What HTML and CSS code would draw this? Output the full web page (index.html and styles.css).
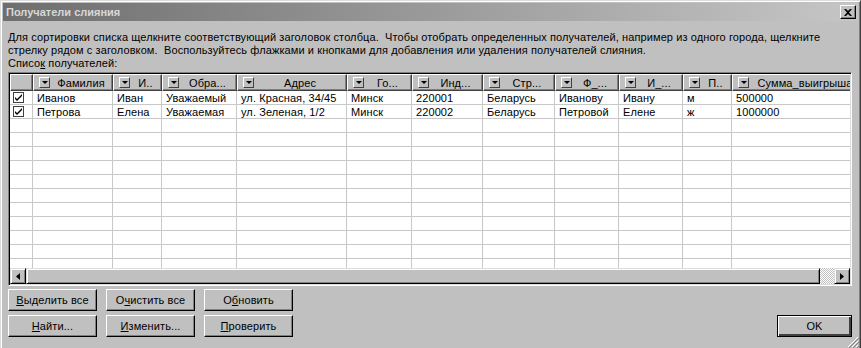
FILE: index.html
```html
<!DOCTYPE html>
<html lang="ru">
<head>
<meta charset="utf-8">
<title>Получатели слияния</title>
<link rel="stylesheet" href="styles.css">
</head>
<body>
<div class="window">
  <div class="titlebar">
    <span class="title">Получатели слияния</span>
    <span class="close"><svg width="8" height="7" viewBox="0 0 8 7"><path d="M0 0h2l2 2 2-2h2L5 3.5 8 7H6L4 5 2 7H0l3-3.5z" fill="#000"/></svg></span>
  </div>
  <div class="content">
    <p class="intro">Для сортировки списка щелкните соответствующий заголовок столбца.&nbsp; Чтобы отобрать определенных получателей, например из одного города, щелкните<br>стрелку рядом с заголовком.&nbsp; Воспользуйтесь флажками и кнопками для добавления или удаления получателей слияния.</p>
    <p class="label">Списо<u>к</u> получателей:</p>
    <div class="grid">
      <div class="table">
        <div class="row head">
          <div class="hc"></div>
          <div class="hc"><span class="dd"></span><span class="hl">Фамилия</span></div>
          <div class="hc"><span class="dd"></span><span class="hl">И..</span></div>
          <div class="hc"><span class="dd"></span><span class="hl">Обра...</span></div>
          <div class="hc"><span class="dd"></span><span class="hl">Адрес</span></div>
          <div class="hc"><span class="dd"></span><span class="hl">Го...</span></div>
          <div class="hc"><span class="dd"></span><span class="hl">Инд...</span></div>
          <div class="hc"><span class="dd"></span><span class="hl">Стр...</span></div>
          <div class="hc"><span class="dd"></span><span class="hl">Ф_...</span></div>
          <div class="hc"><span class="dd"></span><span class="hl">И_...</span></div>
          <div class="hc"><span class="dd"></span><span class="hl">П..</span></div>
          <div class="hc"><span class="dd"></span><span class="hl">Сумма_выигрыша</span></div>
        </div>
        <div class="rows">
          <div class="row">
            <div class="c cb"><span class="check"><svg width="9" height="9" viewBox="0 0 9 9"><path d="M1 4l2 2 5-5v2L3 8 1 6z" fill="#000"/></svg></span></div>
            <div class="c">Иванов</div><div class="c">Иван</div><div class="c">Уважаемый</div><div class="c">ул. Красная, 34/45</div><div class="c">Минск</div><div class="c">220001</div><div class="c">Беларусь</div><div class="c">Иванову</div><div class="c">Ивану</div><div class="c">м</div><div class="c">500000</div>
          </div>
          <div class="row">
            <div class="c cb"><span class="check"><svg width="9" height="9" viewBox="0 0 9 9"><path d="M1 4l2 2 5-5v2L3 8 1 6z" fill="#000"/></svg></span></div>
            <div class="c">Петрова</div><div class="c">Елена</div><div class="c">Уважаемая</div><div class="c">ул. Зеленая, 1/2</div><div class="c">Минск</div><div class="c">220002</div><div class="c">Беларусь</div><div class="c">Петровой</div><div class="c">Елене</div><div class="c">ж</div><div class="c">1000000</div>
          </div>
          <div class="row"><div class="c"></div><div class="c"></div><div class="c"></div><div class="c"></div><div class="c"></div><div class="c"></div><div class="c"></div><div class="c"></div><div class="c"></div><div class="c"></div><div class="c"></div><div class="c"></div></div>
          <div class="row"><div class="c"></div><div class="c"></div><div class="c"></div><div class="c"></div><div class="c"></div><div class="c"></div><div class="c"></div><div class="c"></div><div class="c"></div><div class="c"></div><div class="c"></div><div class="c"></div></div>
          <div class="row"><div class="c"></div><div class="c"></div><div class="c"></div><div class="c"></div><div class="c"></div><div class="c"></div><div class="c"></div><div class="c"></div><div class="c"></div><div class="c"></div><div class="c"></div><div class="c"></div></div>
          <div class="row"><div class="c"></div><div class="c"></div><div class="c"></div><div class="c"></div><div class="c"></div><div class="c"></div><div class="c"></div><div class="c"></div><div class="c"></div><div class="c"></div><div class="c"></div><div class="c"></div></div>
          <div class="row"><div class="c"></div><div class="c"></div><div class="c"></div><div class="c"></div><div class="c"></div><div class="c"></div><div class="c"></div><div class="c"></div><div class="c"></div><div class="c"></div><div class="c"></div><div class="c"></div></div>
          <div class="row"><div class="c"></div><div class="c"></div><div class="c"></div><div class="c"></div><div class="c"></div><div class="c"></div><div class="c"></div><div class="c"></div><div class="c"></div><div class="c"></div><div class="c"></div><div class="c"></div></div>
          <div class="row"><div class="c"></div><div class="c"></div><div class="c"></div><div class="c"></div><div class="c"></div><div class="c"></div><div class="c"></div><div class="c"></div><div class="c"></div><div class="c"></div><div class="c"></div><div class="c"></div></div>
          <div class="row"><div class="c"></div><div class="c"></div><div class="c"></div><div class="c"></div><div class="c"></div><div class="c"></div><div class="c"></div><div class="c"></div><div class="c"></div><div class="c"></div><div class="c"></div><div class="c"></div></div>
          <div class="row"><div class="c"></div><div class="c"></div><div class="c"></div><div class="c"></div><div class="c"></div><div class="c"></div><div class="c"></div><div class="c"></div><div class="c"></div><div class="c"></div><div class="c"></div><div class="c"></div></div>
          <div class="row"><div class="c"></div><div class="c"></div><div class="c"></div><div class="c"></div><div class="c"></div><div class="c"></div><div class="c"></div><div class="c"></div><div class="c"></div><div class="c"></div><div class="c"></div><div class="c"></div></div>
          <div class="row"><div class="c"></div><div class="c"></div><div class="c"></div><div class="c"></div><div class="c"></div><div class="c"></div><div class="c"></div><div class="c"></div><div class="c"></div><div class="c"></div><div class="c"></div><div class="c"></div></div>
        </div>
      </div>
      <div class="hscroll">
        <span class="arrow"><svg width="4" height="7" viewBox="0 0 4 7"><path d="M4 0v7L0 3.5z" fill="#000"/></svg></span>
        <span class="thumb"></span>
        <span class="track"></span>
        <span class="arrow"><svg width="4" height="7" viewBox="0 0 4 7"><path d="M0 0v7l4-3.5z" fill="#000"/></svg></span>
      </div>
    </div>
    <div class="bottom">
      <div class="btns">
        <button class="btn"><u>В</u>ыделить все</button>
        <button class="btn">О<u>ч</u>истить все</button>
        <button class="btn">О<u>б</u>новить</button>
        <button class="btn"><u>Н</u>айти...</button>
        <button class="btn"><u>И</u>зменить...</button>
        <button class="btn"><u>П</u>роверить</button>
      </div>
      <button class="btn ok">OK</button>
    </div>
  </div>
  <span class="grip"><svg width="12" height="12" viewBox="0 0 12 12"><path d="M11 1L1 11M11 5L5 11M11 9L9 11" stroke="#fff" stroke-width="1"/><path d="M12 2L2 12M12 6L6 12M12 10L10 12" stroke="#808080" stroke-width="1"/></svg></span>
</div>
</body>
</html>
```

FILE: styles.css
```css
* { box-sizing: border-box; }
html, body { margin: 0; padding: 0; background: #c0c0c0; }
body {
  font-family: "Liberation Sans", Arial, sans-serif;
  font-size: 11px;
  letter-spacing: 0.1px;
  color: #000;
  overflow: hidden;
}
.window {
  position: relative;
  width: 861px;
  height: 348px;
  display: flex;
  flex-direction: column;
  background: #c0c0c0;
  border-top: 1px solid #dcdcdc;
  border-left: 1px solid #dcdcdc;
  border-right: 1px solid #404040;
  box-shadow: inset 1px 1px 0 #fff, inset -1px 0 0 #808080;
  padding: 2px 2px 0 2px;
}
.titlebar {
  height: 18px;
  display: flex;
  align-items: center;
  justify-content: space-between;
  padding: 0 2px 0 3px;
  background: linear-gradient(to right, #6e6e6e, #c6c6c6);
}
.title {
  color: #d8d8d8;
  font-weight: bold;
  font-size: 11px;
  letter-spacing: 0;
}
.close {
  width: 16px;
  height: 14px;
  background: #c0c0c0;
  border-top: 1px solid #fff;
  border-left: 1px solid #fff;
  border-right: 1px solid #000;
  border-bottom: 1px solid #000;
  box-shadow: inset -1px -1px 0 #808080;
  display: flex;
  align-items: center;
  justify-content: center;
}
.content {
  flex: 1;
  display: flex;
  flex-direction: column;
  padding: 0 6px 0 5px;
}
.intro {
  margin: 10px 0 0 0;
  line-height: 13px;
  white-space: nowrap;
}
.label {
  margin: 0;
  line-height: 13px;
}
.grid {
  margin-top: 2px;
  height: 214px;
  display: flex;
  flex-direction: column;
  border-top: 1px solid #808080;
  border-left: 1px solid #808080;
  border-right: 1px solid #fff;
  border-bottom: 1px solid #fff;
  box-shadow: inset 1px 1px 0 #000, inset -1px -1px 0 #dcdcdc;
  padding: 1px;
  background: #fff;
}
.table {
  flex: 1;
  overflow: hidden;
  display: flex;
  flex-direction: column;
}
.row {
  display: grid;
  grid-template-columns: 23px 80px 49px 75px 110px 65px 71px 72px 64px 64px 49px 130px;
  flex: none;
}
.head .hc {
  height: 17px;
  background: #c0c0c0;
  border-top: 1px solid #fff;
  border-left: 1px solid #fff;
  border-right: 1px solid #404040;
  border-bottom: 1px solid #404040;
  box-shadow: inset -1px -1px 0 #808080;
  display: flex;
  align-items: center;
  padding-left: 5px;
  overflow: hidden;
  white-space: nowrap;
}
.dd {
  flex: none;
  width: 11px;
  height: 11px;
  border-top: 1px solid #fff;
  border-left: 1px solid #fff;
  border-right: 1px solid #404040;
  border-bottom: 1px solid #404040;
  background: #c0c0c0;
  position: relative;
}
.dd::after {
  content: "";
  position: absolute;
  left: 2px;
  top: 3px;
  border-left: 3px solid transparent;
  border-right: 3px solid transparent;
  border-top: 3px solid #000;
}
.hl {
  flex: 1;
  text-align: center;
  overflow: hidden;
  padding: 0 2px;
}
.rows {
  flex: 1;
  overflow: hidden;
}
.rows .row { height: 14px; }
.c {
  height: 14px;
  border-right: 1px solid #c8c8c8;
  border-bottom: 1px solid #c8c8c8;
  padding-left: 4px;
  line-height: 14px;
  white-space: nowrap;
  overflow: hidden;
}
.cb {
  display: flex;
  align-items: center;
  padding-left: 3px;
}
.check {
  width: 11px;
  height: 11px;
  border: 1px solid #404040;
  background: #fff;
  display: flex;
  align-items: center;
  justify-content: center;
}
.hscroll {
  height: 16px;
  display: flex;
  background: #c0c0c0;
}
.arrow {
  width: 16px;
  height: 16px;
  flex: none;
  border-top: 1px solid #dcdcdc;
  border-left: 1px solid #dcdcdc;
  border-right: 1px solid #000;
  border-bottom: 1px solid #000;
  box-shadow: inset 1px 1px 0 #fff, inset -1px -1px 0 #808080;
  display: flex;
  align-items: center;
  justify-content: center;
}
.thumb {
  flex: 1;
  border-top: 1px solid #dcdcdc;
  border-left: 1px solid #dcdcdc;
  border-right: 1px solid #000;
  border-bottom: 1px solid #000;
  box-shadow: inset 1px 1px 0 #fff, inset -1px -1px 0 #808080;
}
.track {
  width: 14px;
  flex: none;
  background: repeating-conic-gradient(#fff 0 25%, #c0c0c0 0 50%) 0 0 / 2px 2px;
}
.bottom {
  display: flex;
  justify-content: space-between;
  align-items: flex-end;
  margin-top: 3px;
}
.btns {
  display: grid;
  grid-template-columns: 89px 89px 89px;
  column-gap: 9px;
  row-gap: 4px;
}
.btn {
  font-family: "Liberation Sans", Arial, sans-serif;
  font-size: 11px;
  letter-spacing: 0.1px;
  color: #000;
  height: 22px;
  padding: 0;
  background: #c0c0c0;
  border-top: 1px solid #fff;
  border-left: 1px solid #fff;
  border-right: 1px solid #000;
  border-bottom: 1px solid #000;
  box-shadow: inset -1px -1px 0 #808080;
}
.ok {
  width: 75px;
  border: 1px solid #000;
  box-shadow: inset 1px 1px 0 #fff, inset -2px -2px 0 #404040, inset -2px -2px 0 #808080;
}
.grip {
  position: absolute;
  right: 1px;
  bottom: 0;
  width: 12px;
  height: 12px;
  display: flex;
}
```
